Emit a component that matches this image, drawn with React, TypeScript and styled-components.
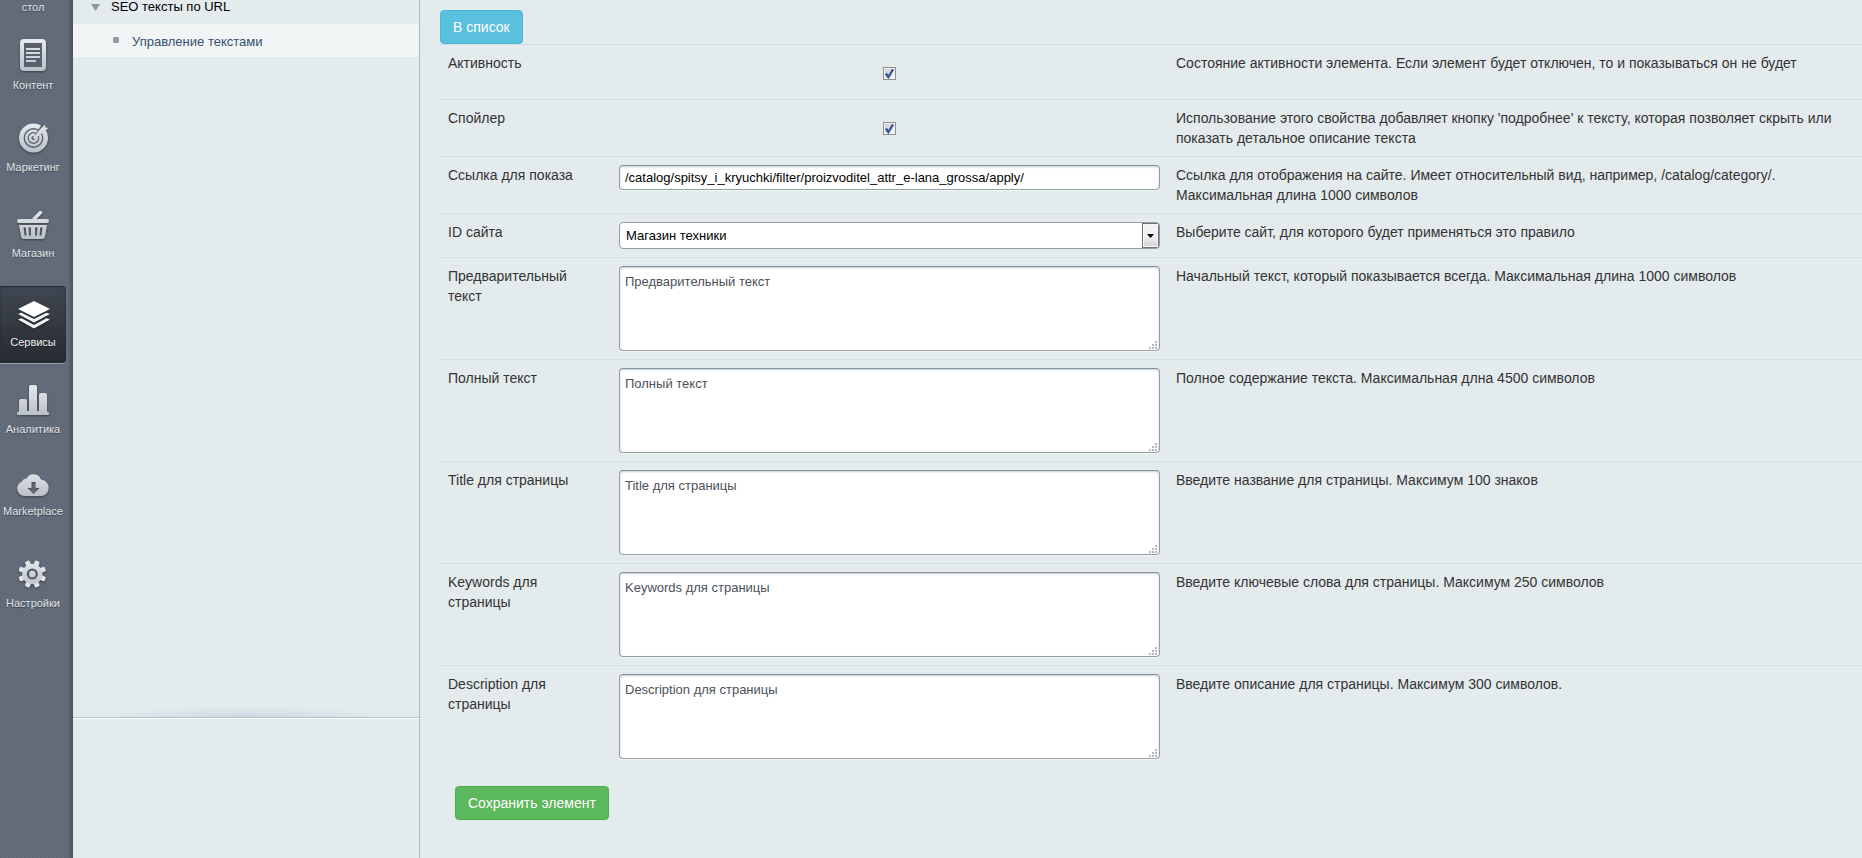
import React from "react";
import styled, { createGlobalStyle } from "styled-components";

const GlobalStyle = createGlobalStyle`
  * { box-sizing: border-box; }
  body {
    margin: 0;
    background: #e3ebed;
    color: #333;
    font-family: Arial, "Liberation Sans", sans-serif;
    font-size: 14px;
    line-height: 20px;
  }
`;

const Page = styled.div`
  display: flex;
  min-height: 100vh;
`;

const Rail = styled.nav`
  display: flex;
  flex-direction: column;
  flex: none;
  width: 73px;
  padding-right: 7px;
  background:
    linear-gradient(to left, #4a505c 0, rgba(74, 80, 92, 0) 5px),
    radial-gradient(circle at 1px 1px, #565e6c 0, rgba(86, 94, 108, 0) 1px) 0 0 / 4px 4px,
    radial-gradient(circle at 1px 1px, #565e6c 0, rgba(86, 94, 108, 0) 1px) 2px 2px / 4px 4px,
    #656d7b;
`;

const RailItem = styled.a<{ $height: number; $active?: boolean }>`
  display: flex;
  flex-direction: column;
  justify-content: flex-end;
  align-items: center;
  gap: 7px;
  flex: none;
  height: ${(p) => p.$height}px;
  margin-top: ${(p) => (p.$active ? 12 : 0)}px;
  padding-bottom: 14px;
  border-radius: 0 4px 4px 0;
  background: ${(p) => (p.$active ? "linear-gradient(#414752, #262b31)" : "none")};
  box-shadow: ${(p) => (p.$active ? "0 1px 0 #99a0aa, inset 0 1px 2px #23272d" : "none")};
  color: ${(p) => (p.$active ? "#f0f3f5" : "#e0e5ea")};
  font-size: 11px;
  line-height: 14px;
  text-decoration: none;
  text-shadow: 0 1px 1px rgba(0, 0, 0, 0.4);
  white-space: nowrap;

  svg {
    overflow: visible;
    filter: drop-shadow(0 1px 1px rgba(0, 0, 0, 0.4));
  }
`;

const Sidebar = styled.aside`
  display: flex;
  flex-direction: column;
  flex: none;
  width: 347px;
  border-right: 1px solid #a9b9cd;
`;

const Tree = styled.div`
  flex: none;
  height: 718px;
  border-bottom: 1px solid #b5c3cd;
  box-shadow: 0 1px 0 #fff;
  background: radial-gradient(ellipse 45% 10px at 50% 100%, #cbd8e3, rgba(203, 216, 227, 0)) no-repeat;
`;

const TreeGroup = styled.a`
  display: flex;
  align-items: center;
  gap: 11px;
  height: 24px;
  padding: 0 0 10px 18px;
  color: #000;
  font-size: 13px;
  line-height: 14px;
  text-decoration: none;
`;

const TreeLeaf = styled.a`
  display: flex;
  align-items: center;
  gap: 13px;
  height: 33px;
  padding: 2px 0 0 40px;
  background: #f1f5f6;
  color: #35506e;
  font-size: 13px;
  text-decoration: none;
`;

const Bullet = styled.span`
  width: 6px;
  height: 6px;
  margin-bottom: 4px;
  border-radius: 1px;
  background: #949ca0;
`;

const Main = styled.main`
  flex: 1;
  min-width: 0;
  padding: 10px 0 0 20px;
`;

const Button = styled.button<{ $tone: "info" | "success" }>`
  display: block;
  height: 34px;
  padding: 0 12px;
  border: 1px solid ${(p) => (p.$tone === "info" ? "#46b8da" : "#4cae4c")};
  border-radius: 4px;
  background: ${(p) => (p.$tone === "info" ? "#5bc0de" : "#5cb85c")};
  color: #fff;
  font: 14px/20px Arial, "Liberation Sans", sans-serif;
`;

const Actions = styled.div`
  padding: 19px 15px;
`;

const Row = styled.div`
  display: grid;
  grid-template-columns: 171fr 557fr 694fr;
  border-top: 1px solid #d5dcde;
`;

const Label = styled.label`
  padding: 8px;
`;

const Hint = styled.div`
  padding: 8px;
`;

const Field = styled.div`
  display: flex;
  flex-direction: column;
  padding: 8px;
`;

const Check = styled.input`
  appearance: none;
  align-self: center;
  width: 13px;
  height: 13px;
  margin: 14px 0 11px;
  border: 1px solid #8e8f8f;
  background: #f4f4f4 linear-gradient(135deg, #c9cfd5, #f6f6f6) content-box;
  padding: 1px;

  &:checked {
    background:
      url("data:image/svg+xml,%3Csvg xmlns='http://www.w3.org/2000/svg' viewBox='0 0 11 11'%3E%3Cpath d='M2.5 5.5L4.5 8.5L8.5 2' fill='none' stroke='%23405590' stroke-width='2'/%3E%3C/svg%3E") border-box,
      linear-gradient(135deg, #c9cfd5, #f6f6f6) content-box,
      #f4f4f4;
  }
`;

const TextBox = styled.input`
  width: 100%;
  height: 25px;
  padding: 0 5px;
  border: 1px solid #959ea3;
  border-top-color: #87919c;
  border-radius: 4px;
  background: #fff;
  box-shadow: inset 0 1px 2px rgba(140, 155, 165, 0.5), 0 1px 0 rgba(255, 255, 255, 0.6);
  color: #000;
  font: 13px/20px Arial, "Liberation Sans", sans-serif;
`;

const SelectShell = styled.div`
  display: flex;
  height: 27px;
  border: 1px solid #959ea3;
  border-radius: 4px;
  background: #fff;
  overflow: hidden;
  position: relative;
`;

const Select = styled.select`
  appearance: none;
  flex: 1;
  padding: 0 6px;
  border: 0;
  background: transparent;
  color: #000;
  font: 13px/20px Arial, "Liberation Sans", sans-serif;
`;

const Arrow = styled.span`
  position: absolute;
  top: 0;
  right: 0;
  bottom: 0;
  display: flex;
  align-items: center;
  justify-content: center;
  width: 17px;
  border: 1px solid #707070;
  background: linear-gradient(#f2f2f2 50%, #d2d2d2);
  box-shadow: inset 0 0 0 1px #f8f8f8;
  pointer-events: none;
`;

const TextAreaShell = styled.div`
  display: flex;
  position: relative;
`;

const TextArea = styled.textarea`
  flex: 1;
  height: 85px;
  padding: 5px;
  border: 1px solid #959ea3;
  border-top-color: #87919c;
  border-radius: 4px;
  background: #fff;
  box-shadow: inset 0 1px 2px rgba(140, 155, 165, 0.5), 0 1px 0 rgba(255, 255, 255, 0.6);
  color: #4b515b;
  font: 13px/20px Arial, "Liberation Sans", sans-serif;
  resize: none;
`;

const Grip = styled.svg`
  position: absolute;
  right: 3px;
  bottom: 2px;
  pointer-events: none;
`;

const METAL = "url(#metal)";

const HiddenDefs = styled.svg`
  position: absolute;
`;

const Defs = () => (
  <HiddenDefs width="0" height="0" aria-hidden="true">
    <defs>
      <linearGradient id="metal" gradientUnits="userSpaceOnUse" x1="0" y1="2" x2="0" y2="32">
        <stop offset="0" stopColor="#e6eaee" />
        <stop offset="1" stopColor="#b9bfc6" />
      </linearGradient>
    </defs>
  </HiddenDefs>
);

const Icon = ({ children }: { children: React.ReactNode }) => (
  <svg width="32" height="32" viewBox="0 0 32 32" aria-hidden="true">
    {children}
  </svg>
);

const teeth = [22.5, 67.5, 112.5, 157.5, 202.5, 247.5, 292.5, 337.5];

const icons = {
  content: (
    <Icon>
      <rect x="5" y="2" width="22" height="28" rx="2" fill="#59616e" stroke={METAL} strokeWidth="4" />
      <path d="M9 10H23M9 14H23M9 18H23M9 22H19" stroke={METAL} strokeWidth="2" fill="none" />
    </Icon>
  ),
  marketing: (
    <Icon>
      <circle cx="16.5" cy="17" r="12" fill="#59616e" />
      <g fill="none" stroke={METAL}>
        <circle cx="16.5" cy="17" r="12.2" strokeWidth="4.6" />
        <circle cx="16.5" cy="17" r="7.2" strokeWidth="2.6" />
        <circle cx="16.5" cy="17" r="3.4" strokeWidth="2.6" />
      </g>
      <path d="M17.500 14L25 3.500L30 7.500L19.500 16.500Z" fill="#59616e" />
      <path d="M15.800 16.800L22.500 9L28 3.500L28.500 6.500L31.500 7L25 12L17.500 18.300Z" fill={METAL} />
    </Icon>
  ),
  shop: (
    <Icon>
      <path d="M17 12L23.500 5.500" stroke={METAL} strokeWidth="3.500" strokeLinecap="round" />
      <rect x="0" y="12" width="32" height="4" rx="2" fill={METAL} />
      <path
        fillRule="evenodd"
        fill={METAL}
        d="M2 18H30L28 29.500Q27.500 32 25.500 32H6.500Q4.500 32 4 29.500ZM6.500 20.500L7.500 28.500H9.500L8.800 20.500ZM11.500 20.500L12 28.500H14L13.800 20.500ZM18 20.500V28.500H20L20.500 20.500ZM23.200 20.500L22.500 28.500H24.500L25.500 20.500Z"
      />
    </Icon>
  ),
  services: (
    <Icon>
      <g fill="#f4f6f7">
        <path d="M17 5L33 13L17 21L1 13Z" fill="#fff" />
        <path d="M1 18L4.500 16.800L17 23L29.500 16.800L33 18L17 26.500Z" />
        <path d="M1 23.500L4.500 22.300L17 29L29.500 22.300L33 23.500L17 32.500Z" />
      </g>
    </Icon>
  ),
  analytics: (
    <Icon>
      <path
        fill={METAL}
        d="M2 28.500V18Q2 16 4 16H8Q10 16 10 18V28H12V4Q12 2 14 2H18Q20 2 20 4V28H22V12Q22 10 24 10H28Q30 10 30 12V28.500Q32 28.500 32 30V31Q32 32 31 32H1Q0 32 0 31V30Q0 28.500 2 28.500Z"
      />
    </Icon>
  ),
  marketplace: (
    <Icon>
      <path
        fillRule="evenodd"
        fill={METAL}
        d="M7.500 31A7.500 7.500 0 0 1 5 16.500A5 5 0 0 1 9.500 13.500A8 8 0 0 1 24 14.500A8.300 8.300 0 0 1 24.500 31ZM14.500 17V23H10.500L16.500 29L22.500 23H18.500V17Z"
      />
    </Icon>
  ),
  settings: (
    <Icon>
      <g fill={METAL}>
        {teeth.map((a) => (
          <rect key={a} x="12.800" y="3" width="5" height="6.500" rx="1.500" transform={`rotate(${a} 15.300 17)`} />
        ))}
      </g>
      <circle cx="15.300" cy="17" r="7.900" fill="#59616e" stroke={METAL} strokeWidth="4.600" />
      <circle cx="15.300" cy="17" r="3.200" fill={METAL} />
    </Icon>
  ),
};

const railItems = [
  { label: "стол", height: 28 },
  { label: "Контент", height: 78, icon: icons.content },
  { label: "Маркетинг", height: 82, icon: icons.marketing },
  { label: "Магазин", height: 86, icon: icons.shop },
  { label: "Сервисы", height: 77, icon: icons.services, active: true },
  { label: "Аналитика", height: 87, icon: icons.analytics },
  { label: "Marketplace", height: 82, icon: icons.marketplace },
  { label: "Настройки", height: 92, icon: icons.settings },
];

type FieldKind = "check" | "text" | "select" | "area";

const fields: { id: string; label: string; kind: FieldKind; value?: string; hint: string }[] = [
  {
    id: "active",
    label: "Активность",
    kind: "check",
    hint: "Состояние активности элемента. Если элемент будет отключен, то и показываться он не будет",
  },
  {
    id: "spoiler",
    label: "Спойлер",
    kind: "check",
    hint: "Использование этого свойства добавляет кнопку 'подробнее' к тексту, которая позволяет скрыть или показать детальное описание текста",
  },
  {
    id: "link",
    label: "Ссылка для показа",
    kind: "text",
    value: "/catalog/spitsy_i_kryuchki/filter/proizvoditel_attr_e-lana_grossa/apply/",
    hint: "Ссылка для отображения на сайте. Имеет относительный вид, например, /catalog/category/. Максимальная длина 1000 символов",
  },
  {
    id: "site",
    label: "ID сайта",
    kind: "select",
    value: "Магазин техники",
    hint: "Выберите сайт, для которого будет применяться это правило",
  },
  {
    id: "preview",
    label: "Предварительный текст",
    kind: "area",
    value: "Предварительный текст",
    hint: "Начальный текст, который показывается всегда. Максимальная длина 1000 символов",
  },
  {
    id: "full",
    label: "Полный текст",
    kind: "area",
    value: "Полный текст",
    hint: "Полное содержание текста. Максимальная длна 4500 символов",
  },
  {
    id: "title",
    label: "Title для страницы",
    kind: "area",
    value: "Title для страницы",
    hint: "Введите название для страницы. Максимум 100 знаков",
  },
  {
    id: "keywords",
    label: "Keywords для страницы",
    kind: "area",
    value: "Keywords для страницы",
    hint: "Введите ключевые слова для страницы. Максимум 250 символов",
  },
  {
    id: "description",
    label: "Description для страницы",
    kind: "area",
    value: "Description для страницы",
    hint: "Введите описание для страницы. Максимум 300 символов.",
  },
];

const Control = ({ id, kind, value }: { id: string; kind: FieldKind; value?: string }) => {
  if (kind === "check") return <Check id={id} type="checkbox" defaultChecked />;
  if (kind === "text") return <TextBox id={id} type="text" defaultValue={value} />;
  if (kind === "select")
    return (
      <SelectShell>
        <Select id={id} defaultValue={value}>
          <option>{value}</option>
        </Select>
        <Arrow>
          <svg width="7" height="4" viewBox="0 0 7 4" aria-hidden="true">
            <path d="M0 0H7L3.500 4Z" fill="#000" />
          </svg>
        </Arrow>
      </SelectShell>
    );
  return (
    <TextAreaShell>
      <TextArea id={id} defaultValue={value} />
      <Grip width="8" height="8" viewBox="0 0 8 8" aria-hidden="true">
        <path d="M6 0h2v2h-2zM3 3h2v2h-2zM6 3h2v2h-2zM0 6h2v2h-2zM3 6h2v2h-2zM6 6h2v2h-2z" fill="#b8b8b8" />
      </Grip>
    </TextAreaShell>
  );
};

export default function App() {
  return (
    <Page>
      <GlobalStyle />
      <Defs />
      <Rail>
        {railItems.map((item) => (
          <RailItem key={item.label} href="#" $height={item.height} $active={item.active}>
            {item.icon}
            <span>{item.label}</span>
          </RailItem>
        ))}
      </Rail>
      <Sidebar>
        <Tree>
          <TreeGroup href="#">
            <svg width="9" height="7" viewBox="0 0 9 7" aria-hidden="true">
              <path d="M0 0H9L4.500 7Z" fill="#8f979b" />
            </svg>
            SEO тексты по URL
          </TreeGroup>
          <TreeLeaf href="#">
            <Bullet />
            Управление текстами
          </TreeLeaf>
        </Tree>
      </Sidebar>
      <Main>
        <Button type="button" $tone="info">
          В список
        </Button>
        <form>
          {fields.map((f) => (
            <Row key={f.id}>
              <Label htmlFor={f.id}>{f.label}</Label>
              <Field>
                <Control id={f.id} kind={f.kind} value={f.value} />
              </Field>
              <Hint>{f.hint}</Hint>
            </Row>
          ))}
          <Actions>
            <Button type="submit" $tone="success">
              Сохранить элемент
            </Button>
          </Actions>
        </form>
      </Main>
    </Page>
  );
}
